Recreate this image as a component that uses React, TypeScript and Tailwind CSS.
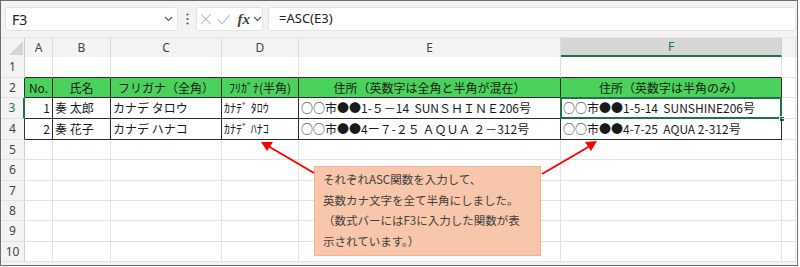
import React from "react";

const COLS = [28, 58, 111, 77, 262, 221, 14];
const LETTERS = ["A", "B", "C", "D", "E", "F", ""];
const ROWS = [21, 20, 21, 21, 20, 21, 20, 20, 21, 20];

const JP = { fontFamily: '"Noto Sans CJK JP", "Noto Sans", sans-serif' };
const UI = { fontFamily: '"Noto Sans", "Noto Sans CJK JP", sans-serif' };

type Cell = { t: string; align?: "l" | "c" | "r"; small?: boolean };

const DATA: Record<number, Cell[]> = {
  1: [
    { t: "No.", align: "c" },
    { t: "氏名", align: "c" },
    { t: "フリガナ（全角）", align: "c" },
    { t: "ﾌﾘｶﾞﾅ(半角)", align: "c" },
    { t: "住所（英数字は全角と半角が混在）", align: "c" },
    { t: "住所（英数字は半角のみ）", align: "c" },
  ],
  2: [
    { t: "1", align: "r" },
    { t: "奏 太郎" },
    { t: "カナデ タロウ" },
    { t: "ｶﾅﾃﾞ ﾀﾛｳ", small: true },
    { t: "○○市●●1-５－14  SUNＳＨＩＮＥ206号" },
    { t: "○○市●●1-5-14  SUNSHINE206号" },
  ],
  3: [
    { t: "2", align: "r" },
    { t: "奏 花子" },
    { t: "カナデ ハナコ" },
    { t: "ｶﾅﾃﾞ ﾊﾅｺ", small: true },
    { t: "○○市●●4ー７-２５ ＡＱＵＡ ２－312号" },
    { t: "○○市●●4-7-25  AQUA 2-312号" },
  ],
};

function Chevron() {
  return (
    <svg width="9" height="6" viewBox="0 0 9 6">
      <path d="M1 1 L4.5 4.5 L8 1" fill="none" stroke="#555" strokeWidth="1.1" />
    </svg>
  );
}

function FormulaBar() {
  return (
    <div className="flex h-[36px] items-center bg-[#f3f3f3] pl-[4px]">
      <div
        className="flex h-[24px] w-[173px] items-center justify-between rounded-[3px] border border-[#e3e3e3] bg-white pl-[6px] pr-[4px]"
        style={UI}
      >
        <span className="text-[14px] text-[#222]">F3</span>
        <Chevron />
      </div>
      <div className="flex w-[18px] justify-center">
        <svg width="3" height="12" viewBox="0 0 3 12">
          <circle cx="1.5" cy="1.5" r="1.1" fill="#555" />
          <circle cx="1.5" cy="6" r="1.1" fill="#555" />
          <circle cx="1.5" cy="10.5" r="1.1" fill="#555" />
        </svg>
      </div>
      <div className="flex h-[24px] w-[67px] items-center rounded-[3px] border border-[#e3e3e3] bg-white pl-[3px]">
        <svg width="12" height="12" viewBox="0 0 12 12">
          <path d="M1 1 L11 11 M11 1 L1 11" stroke="#bdbdbd" strokeWidth="1.1" />
        </svg>
        <svg className="ml-[5px]" width="14" height="11" viewBox="0 0 14 11">
          <path d="M1 5.5 L5 10 L13 1" fill="none" stroke="#bdbdbd" strokeWidth="1.1" />
        </svg>
        <span
          className="ml-[7px] text-[15px] font-bold italic leading-none text-[#444]"
          style={{ fontFamily: '"Liberation Serif", serif' }}
        >
          fx
        </span>
        <span className="ml-[3px] flex">
          <Chevron />
        </span>
      </div>
      <div
        className="ml-[5px] flex h-[24px] w-[528px] items-center rounded-[3px] border border-[#e3e3e3] bg-white pl-[10px] text-[13px] text-[#222]"
        style={UI}
      >
        =ASC(E3)
      </div>
    </div>
  );
}

function HeaderRow() {
  return (
    <div className="flex h-[20px] border-t border-[#e6e6e6] bg-[#f3f3f3]" style={UI}>
      <div className="relative w-[24px] border-r border-[#cfcfcf]">
        <svg className="absolute right-[1px] bottom-[2px]" width="14" height="14" viewBox="0 0 14 14">
          <polygon points="14,0 14,14 0,14" fill="#d4d4d4" />
        </svg>
      </div>
      {COLS.map((w, i) => {
        const sel = i === 5;
        return (
          <div
            key={i}
            style={{ width: w }}
            className={
              sel
                ? "flex items-center justify-center border-r border-b-2 border-r-[#cfcfcf] border-b-[#217346] bg-[#d6d6d6] text-[12px] text-[#217346]"
                : "flex items-center justify-center border-r border-[#dcdcdc] text-[12px] text-[#444]"
            }
          >
            {LETTERS[i]}
          </div>
        );
      })}
    </div>
  );
}

function GridRow({ r, h }: { r: number; h: number }) {
  const inTable = r >= 1 && r <= 3;
  const isHeader = r === 1;
  const selRow = r === 2;
  return (
    <div className="flex" style={{ height: h }}>
      <div
        className={
          "box-border flex w-[24px] items-center justify-center border-b border-b-[#e2e2e2] bg-[#f3f3f3] text-[12px] " +
          (selRow
            ? "border-r-2 border-r-[#217346] text-[#217346]"
            : inTable
            ? "border-r border-r-[#333] text-[#444]"
            : "border-r border-r-[#cfcfcf] text-[#444]")
        }
        style={UI}
      >
        {r + 1}
      </div>
      {COLS.map((w, i) => {
        const tableCell = inTable && i <= 5;
        const topOfTable = r === 0 && i <= 5;
        let cls = "relative box-border flex items-center overflow-visible whitespace-pre text-[12px] text-[#1a1a1a] ";
        cls += tableCell ? "border-r border-b border-[#2a2a2a] " : "border-r border-r-[#e2e2e2] ";
        if (!tableCell) cls += topOfTable ? "border-b border-b-[#2a2a2a] " : "border-b border-b-[#e2e2e2] ";
        if (isHeader && i <= 5) cls += "bg-[#4bd25c] ";
        const cell = inTable && i <= 5 ? DATA[r][i] : null;
        if (cell) {
          cls += cell.align === "c" ? "justify-center " : cell.align === "r" ? "justify-end pr-[2px] " : "pl-[2px] ";
        }
        return (
          <div key={i} className={cls} style={{ width: w, ...JP }}>
            {cell && <span className={cell.small ? "text-[12px]" : ""}>{cell.t}</span>}
            {selRow && i === 5 && (
              <>
                <div className="pointer-events-none absolute left-[-1px] top-[-1px] right-[-1px] bottom-[-1px] border-2 border-[#217346]" />
                <div className="absolute right-[-4px] bottom-[-4px] h-[6px] w-[6px] border border-white bg-[#217346]" />
              </>
            )}
          </div>
        );
      })}
    </div>
  );
}

export default function App() {
  return (
    <div className="relative h-[267px] w-[800px] overflow-hidden bg-white">
      <div className="box-border h-[266px] w-[798px] border border-[#6e6e6e] bg-[#f3f3f3]">
        <FormulaBar />
        <HeaderRow />
        <div className="bg-white">
          {ROWS.map((h, r) => (
            <GridRow key={r} r={r} h={h} />
          ))}
        </div>
      </div>

      {/* callout */}
      <div
        className="absolute left-[314px] top-[166px] box-border h-[90px] w-[227px] border border-[#f2b48f] bg-[#f8c6aa] pl-[8px] pt-[2px] text-[11.5px] leading-[20.5px] text-[#404040]"
        style={JP}
      >
        <div>それぞれASC関数を入力して、</div>
        <div>英数カナ文字を全て半角にしました。</div>
        <div>（数式バーにはF3に入力した関数が表</div>
        <div>示されています。）</div>
      </div>

      {/* arrows */}
      <svg className="pointer-events-none absolute left-0 top-0" width="800" height="267" viewBox="0 0 800 267">
        <line x1="314" y1="173" x2="268" y2="146" stroke="#f00" strokeWidth="2" />
        <polygon points="261,142 273,142 267,151" fill="#f00" />
        <line x1="542" y1="174" x2="590" y2="146" stroke="#f00" strokeWidth="2" />
        <polygon points="597,141 585,142 591,151" fill="#f00" />
      </svg>
    </div>
  );
}
